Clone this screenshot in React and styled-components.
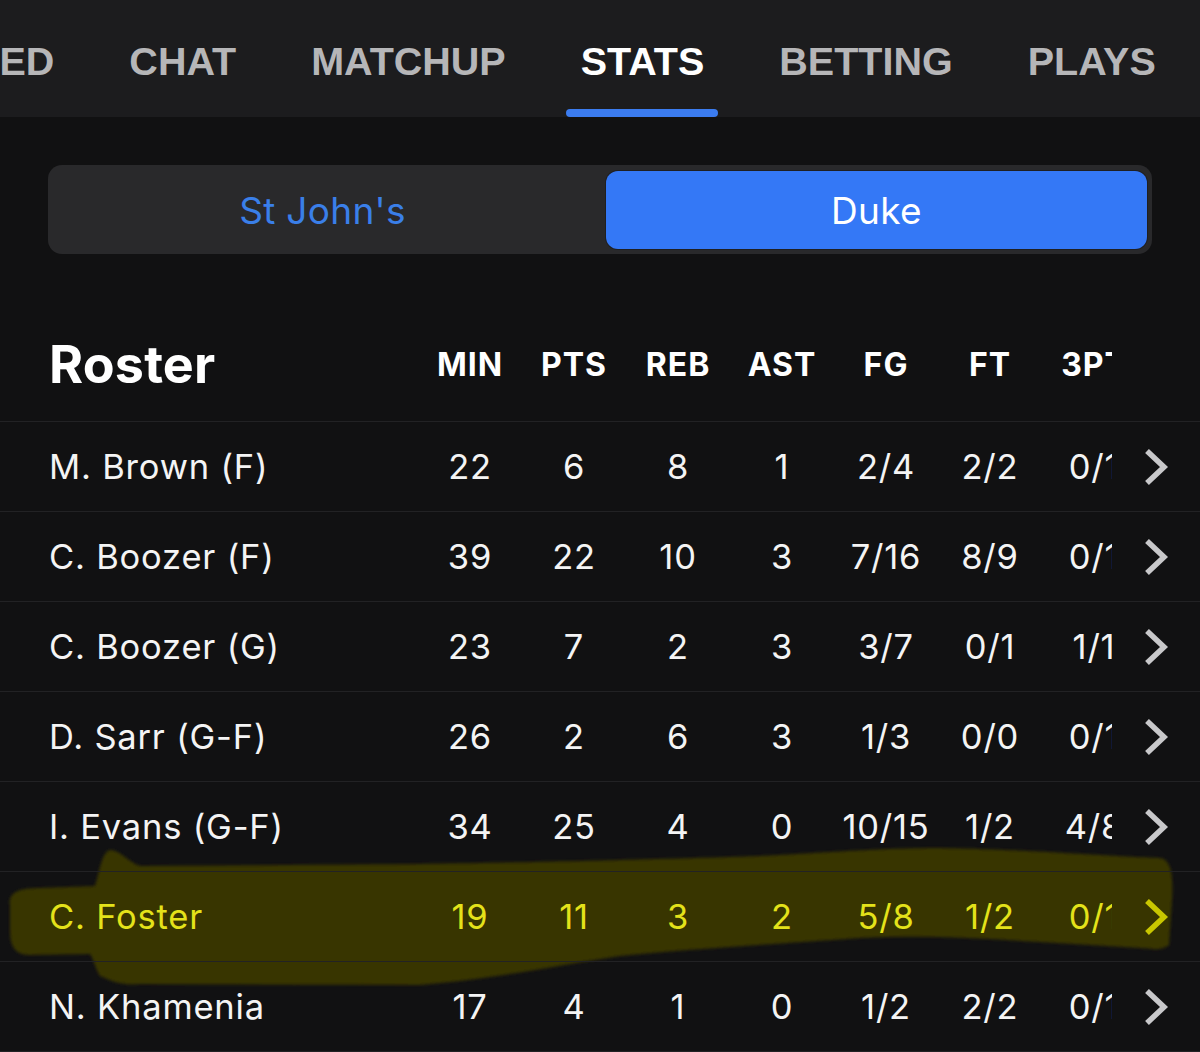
import styled, { createGlobalStyle } from 'styled-components';

const GlobalStyle = createGlobalStyle`
  body {
    margin: 0;
    background: #111112;
    font-family: Inter, "Noto Sans", sans-serif;
  }
`;

const Page = styled.div`
  width: 1200px;
  height: 1052px;
  overflow: hidden;
  background: #111112;
`;

const TopBar = styled.nav`
  height: 117px;
  background: #1c1c1e;
  display: flex;
  overflow: hidden;
`;

const TabStrip = styled.div`
  display: flex;
  gap: 43px;
  margin-left: -67px;
`;

const Tab = styled.div`
  position: relative;
  height: 117px;
  box-sizing: border-box;
  padding: 6px 16px 0;
  display: flex;
  align-items: center;
  white-space: nowrap;
  font-family: "Liberation Sans", Arial, sans-serif;
  font-weight: 700;
  font-size: 39.5px;
  color: ${props => props.active ? '#ffffff' : '#b6b6b8'};

  &::after {
    content: '';
    display: ${props => props.active ? 'block' : 'none'};
    position: absolute;
    left: 1px;
    right: 2px;
    bottom: 0;
    height: 8px;
    border-radius: 4px;
    background: #3b7cf0;
  }
`;

const Segmented = styled.div`
  margin: 48px 48px 0;
  height: 89px;
  box-sizing: border-box;
  padding: 6px 5px 5px;
  background: #29292b;
  border-radius: 14px;
  display: grid;
  grid-template-columns: 1fr 541px;
`;

const Segment = styled.div`
  display: flex;
  align-items: center;
  justify-content: center;
  padding-right: ${props => props.selected ? '0' : '14px'};
  border-radius: 12px;
  font-size: 37px;
  letter-spacing: 0.3px;
  color: ${props => props.selected ? '#ffffff' : '#3a7fe9'};
  background: ${props => props.selected ? '#3478f6' : 'transparent'};
  box-shadow: ${props => props.selected ? '0 0 0 1px #1f1f21' : 'none'};
`;

const Table = styled.div`
  position: relative;
  margin-top: 78px;
`;

const Marker = styled.svg`
  position: absolute;
  top: 0;
  left: 0;
  z-index: 0;
  pointer-events: none;
`;

const Row = styled.div`
  position: relative;
  z-index: 1;
  display: grid;
  grid-template-columns: 369px 694px 1fr;
  align-items: center;
  height: 90px;
  box-sizing: border-box;
  padding-left: 49px;
  padding-bottom: ${props => props.header ? '24px' : '0'};
  border-bottom: 1px solid #222224;
  font-size: 34.5px;
  letter-spacing: 0.8px;
  color: ${props => props.highlight ? '#e4e21a' : '#f4f4f4'};
`;

const Title = styled.div`
  font-size: 52px;
  font-weight: 700;
  letter-spacing: 0.2px;
  color: #ffffff;
`;

const Name = styled.div`
  white-space: nowrap;
`;

const Stats = styled.div`
  display: grid;
  grid-template-columns: repeat(7, 104px);
  overflow: hidden;
`;

const Cell = styled.div`
  text-align: center;
  white-space: nowrap;
  font-weight: ${props => props.head ? 700 : 400};
  font-size: ${props => props.head ? '32px' : '34.5px'};
  letter-spacing: ${props => props.head ? '1px' : '0.8px'};
  color: ${props => props.head ? '#ffffff' : 'inherit'};
`;

const ChevronCell = styled.div`
  display: flex;
  align-items: center;
  padding-left: 31px;
`;

const tabs = ['FEED', 'CHAT', 'MATCHUP', 'STATS', 'BETTING', 'PLAYS'];
const columns = ['MIN', 'PTS', 'REB', 'AST', 'FG', 'FT', '3PT'];

const players = [
  { name: 'M. Brown (F)', stats: ['22', '6', '8', '1', '2/4', '2/2', '0/1'] },
  { name: 'C. Boozer (F)', stats: ['39', '22', '10', '3', '7/16', '8/9', '0/1'] },
  { name: 'C. Boozer (G)', stats: ['23', '7', '2', '3', '3/7', '0/1', '1/1'] },
  { name: 'D. Sarr (G-F)', stats: ['26', '2', '6', '3', '1/3', '0/0', '0/1'] },
  { name: 'I. Evans (G-F)', stats: ['34', '25', '4', '0', '10/15', '1/2', '4/8'] },
  { name: 'C. Foster', stats: ['19', '11', '3', '2', '5/8', '1/2', '0/1'], highlight: true },
  { name: 'N. Khamenia', stats: ['17', '4', '1', '0', '1/2', '2/2', '0/1'] },
];

const Chevron = ({ color }) => (
  <svg width="26" height="38" viewBox="0 0 26 38">
    <path d="M4 3 L21 19 L4 35" fill="none" stroke={color} strokeWidth="5.5" />
  </svg>
);

// marker stroke drawn in page coordinates; table starts at y=332
const markerPath = `
  M 10 905 C 8 893, 18 888, 40 888 L 95 886
  C 100 870, 102 852, 110 850 C 120 850, 128 862, 140 866
  L 420 864 C 560 862, 700 858, 760 856 C 840 852, 880 848, 940 848
  C 1040 850, 1100 856, 1160 858 C 1173 860, 1173 880, 1172 900
  L 1169 945 C 1160 952, 1150 948, 1140 948 L 1040 942
  C 980 938, 920 935, 860 938 C 760 945, 680 950, 620 956
  C 560 965, 500 978, 420 985 L 140 984
  C 120 986, 110 980, 100 976 C 95 968, 94 960, 90 954
  L 30 955 C 14 955, 10 945, 10 930 Z
`;

export default function App() {
  return (
    <Page>
      <GlobalStyle />
      <TopBar>
        <TabStrip>
          {tabs.map(t => (
            <Tab key={t} active={t === 'STATS'}>{t}</Tab>
          ))}
        </TabStrip>
      </TopBar>

      <Segmented>
        <Segment>St John's</Segment>
        <Segment selected>Duke</Segment>
      </Segmented>

      <Table>
        <Marker width="1200" height="720" viewBox="0 332 1200 720">
          <defs>
            <filter id="soft">
              <feGaussianBlur stdDeviation="1.6" />
            </filter>
          </defs>
          <path d={markerPath} fill="#393400" filter="url(#soft)" />
        </Marker>
        <Row header>
          <Title>Roster</Title>
          <Stats>
            {columns.map(c => <Cell head key={c}>{c}</Cell>)}
          </Stats>
          <div />
        </Row>
        {players.map(p => (
          <Row key={p.name + p.stats[0]} highlight={p.highlight}>
            <Name>{p.name}</Name>
            <Stats>
              {p.stats.map((s, i) => <Cell key={i}>{s}</Cell>)}
            </Stats>
            <ChevronCell>
              <Chevron color={p.highlight ? '#c9c600' : '#c8c8ca'} />
            </ChevronCell>
          </Row>
        ))}
      </Table>
    </Page>
  );
}
